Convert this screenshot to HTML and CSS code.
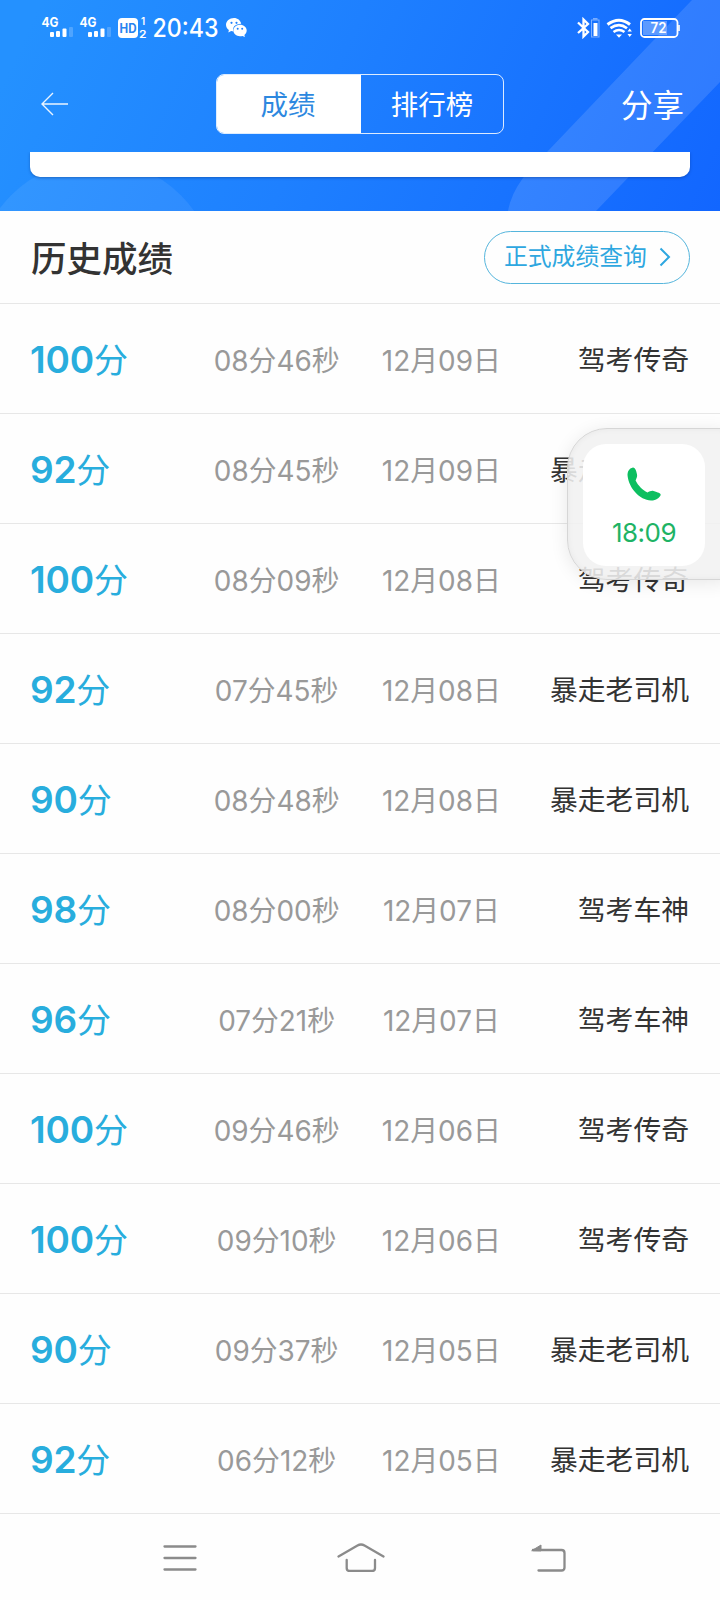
FILE: index.html
```html
<!DOCTYPE html>
<html lang="zh-CN">
<head>
<meta charset="utf-8">
<title>历史成绩</title>
<link rel="stylesheet" href="styles.css">
</head>
<body>
<div class="screen">
  <header class="hero">
    <svg class="hero-art" viewBox="0 0 720 211" width="720" height="211">
      <circle cx="96" cy="280" r="120" fill="#fff" fill-opacity=".07"/>
      <path d="M692 0H720V82L596 211H508Q511 194 523 178Q533 165 547 152Z" fill="#fff" fill-opacity=".12"/>
    </svg>
    <div class="status">
      <div class="status-left">
        <svg width="177" height="24" viewBox="41 15 177 24" class="status-icons">
          <g fill="#fff">
            <text x="41.5" y="26.5" class="net" textLength="17" lengthAdjust="spacingAndGlyphs">4G</text><text x="79.5" y="26.5" class="net" textLength="17" lengthAdjust="spacingAndGlyphs">4G</text>
            <rect x="50" y="32" width="4" height="5" rx="1"/><rect x="56" y="31" width="4" height="6" rx="1"/><rect x="62.500" y="28.500" width="4" height="8.500" rx="1"/><rect x="69" y="27" width="4" height="10" rx="1" opacity=".2"/>
            <rect x="88" y="32" width="4" height="5" rx="1"/><rect x="94" y="31" width="4" height="6" rx="1"/><rect x="100.500" y="28.500" width="4" height="8.500" rx="1"/><rect x="107" y="27" width="4" height="10" rx="1" opacity=".2"/>
            <rect x="118" y="18" width="20" height="20" rx="4"/>
            <text x="141" y="25.200" class="sim">1</text><text x="139" y="37.500" class="sim" textLength="7.500" lengthAdjust="spacingAndGlyphs">2</text>
            <text x="152.500" y="37" class="clock" textLength="66" lengthAdjust="spacingAndGlyphs">20:43</text>
          </g>
          <text x="119.500" y="32.500" class="hd" textLength="17" lengthAdjust="spacingAndGlyphs">HD</text>
        </svg>
        <svg width="21" height="20" viewBox="0 0 21 20" class="wechat">
          <path fill="#fff" d="M8 0C3.500 0 0 3 0 6.800c0 2.100 1.100 4 2.900 5.200L2.300 14.600l2.900-1.500q1.100.4 2.300.4C6 9.300 9 5.800 15.200 5.700 14.500 2.400 11.600 0 8 0Z"/>
          <path fill="#fff" d="M14 6.800c3.700 0 6.700 2.500 6.700 5.700 0 1.800-.9 3.300-2.300 4.400l.5 2.200-2.500-1.200q-1.100.3-2.400.3c-3.700 0-6.600-2.500-6.600-5.700s2.900-5.700 6.600-5.700Z"/>
          <g fill="#2081fc"><circle cx="5.500" cy="4.800" r="1.100"/><circle cx="10.500" cy="4.800" r="1.100"/><circle cx="11.700" cy="10.800" r="1"/><circle cx="16.200" cy="10.800" r="1"/></g>
        </svg>
      </div>
      <svg width="104" height="22" viewBox="576 17 104 22">
        <g fill="none" stroke="#fff">
          <path d="M578 22.500L588 32L583.500 36.500V19.500L588 24L578 33" stroke-width="2.300"/>
          <rect x="591.500" y="20" width="7.500" height="17" stroke-opacity=".45"/>
          <path d="M593 18.800h4.500" stroke-opacity=".6"/>
          <path d="M607.500 24.500Q619 16 630 24.500" stroke-width="3"/>
          <path d="M610.500 28.200Q619 22 627 28.200" stroke-width="2.700"/>
          <path d="M613.500 32Q619 28 624.500 32" stroke-width="2.500"/>
          <rect x="641" y="19" width="36.500" height="18" rx="3.500" stroke-width="1.800"/>
          <path d="M679 25v6" stroke-width="1.600"/>
        </g>
        <g fill="#fff"><rect x="593.500" y="23" width="4" height="13"/><path d="M616 34.500h6l-3 3.300zM627.500 31.500l2.200-3 2.200 3zM627.500 34l2.200 3 2.200-3z"/><rect x="643" y="21" width="24" height="14" opacity=".3"/></g>
        <text x="650.500" y="33" class="battery" textLength="16" lengthAdjust="spacingAndGlyphs">72</text>
      </svg>
    </div>
    <nav class="nav">
      <svg class="back" width="28" height="24" viewBox="0 0 28 24"><path d="M12 1L1 12L12 23M1 12H27" fill="none" stroke="#fff" stroke-opacity=".9" stroke-width="1.400"/></svg>
      <div class="tabs"><span class="tab tab-active">成绩</span><span class="tab">排行榜</span></div>
      <span class="share">分享</span>
    </nav>
    <div class="card-edge"></div>
  </header>
  <section class="heading">
    <h1 class="title">历史成绩</h1>
    <a class="query">正式成绩查询<svg width="12" height="20" viewBox="0 0 12 20"><path d="M1.500 1.500L10 10L1.500 18.500" fill="none" stroke="#2ea7e0" stroke-width="2"/></svg></a>
  </section>
  <main>
    <div class="row"><span class="score"><b>100</b>分</span><span class="cell">08分46秒</span><span class="cell">12月09日</span><span class="name">驾考传奇</span></div>
    <div class="row"><span class="score"><b>92</b>分</span><span class="cell">08分45秒</span><span class="cell">12月09日</span><span class="name">暴走老司机</span></div>
    <div class="row"><span class="score"><b>100</b>分</span><span class="cell">08分09秒</span><span class="cell">12月08日</span><span class="name">驾考传奇</span></div>
    <div class="row"><span class="score"><b>92</b>分</span><span class="cell">07分45秒</span><span class="cell">12月08日</span><span class="name">暴走老司机</span></div>
    <div class="row"><span class="score"><b>90</b>分</span><span class="cell">08分48秒</span><span class="cell">12月08日</span><span class="name">暴走老司机</span></div>
    <div class="row"><span class="score"><b>98</b>分</span><span class="cell">08分00秒</span><span class="cell">12月07日</span><span class="name">驾考车神</span></div>
    <div class="row"><span class="score"><b>96</b>分</span><span class="cell">07分21秒</span><span class="cell">12月07日</span><span class="name">驾考车神</span></div>
    <div class="row"><span class="score"><b>100</b>分</span><span class="cell">09分46秒</span><span class="cell">12月06日</span><span class="name">驾考传奇</span></div>
    <div class="row"><span class="score"><b>100</b>分</span><span class="cell">09分10秒</span><span class="cell">12月06日</span><span class="name">驾考传奇</span></div>
    <div class="row"><span class="score"><b>90</b>分</span><span class="cell">09分37秒</span><span class="cell">12月05日</span><span class="name">暴走老司机</span></div>
    <div class="row"><span class="score"><b>92</b>分</span><span class="cell">06分12秒</span><span class="cell">12月05日</span><span class="name">暴走老司机</span></div>
  </main>
  <footer class="system-nav">
    <svg width="34" height="28" viewBox="0 0 34 28"><path d="M1.500 2.500H32.500M1.500 14H32.500M1.500 25.500H32.500"/></svg>
    <svg class="home" width="48" height="30" viewBox="0 0 48 30"><path d="M1.500 14.500L20.500 3.500Q24 1.500 27.500 3.500L46.500 14.500M9.700 18V26Q9.700 29 12.700 29H35Q38 29 38 26V18"/></svg>
    <svg width="36" height="30" viewBox="0 0 36 30"><path d="M2 7H30.500Q33.500 7 33.500 10V24.500Q33.500 27.500 30.500 27.500H7.500"/><path class="tip" d="M1 7.500L10 2V7.500Z"/></svg>
  </footer>
  <aside class="call">
    <div class="call-card">
      <svg width="34" height="34" viewBox="0 0 34 34"><path fill="#0cbf60" d="M6 .5C2 1.500 .3 4.500 .6 9C2 21 12.500 33 24 33.500C29 33.600 32.500 31 33.700 28C33.800 26 31 25.600 26.500 24C24.500 23.500 22.500 24.500 20.500 25.500C15.500 23 11 18.500 8.600 13.500C9.300 11.500 10.600 9.500 10 7.500C9.500 4.500 8.500 .5 6 .5Z"/></svg>
      <span class="call-time">18:09</span>
    </div>
  </aside>
</div>
</body>
</html>
```
FILE: styles.css
```css
* { box-sizing: border-box; }
body { margin: 0; background: #fff; font-family: Inter, "Noto Sans CJK SC", sans-serif; }
.screen { position: relative; width: 720px; height: 1600px; overflow: hidden; background: #fefefe; }
.hero { position: relative; height: 211px; background: linear-gradient(115deg, #2491ff 5%, #1e80ff 45%, #1266ff 100%); }
.hero-art { position: absolute; left: 0; top: 0; }
.status { position: relative; height: 52px; padding: 15px 40px 0 41px; display: flex; justify-content: space-between; align-items: flex-start; }
.status > svg { margin-top: 2px; }
.status-left { display: flex; gap: 8px; }
.status-icons { overflow: visible; }
.wechat { margin-top: 3px; }
.net { font-size: 13.5px; font-weight: 700; }
.sim { font-size: 9.8px; font-weight: 600; }
.clock { font-size: 25px; font-weight: 500; }
.hd { font-size: 12.5px; font-weight: 700; fill: #2784f0; }
.battery { font-size: 14px; font-weight: 600; fill: #fff; }
.nav { position: relative; height: 100px; padding: 22px 36px 18px 41px; display: grid; grid-template-columns: 175px 288px 1fr; grid-template-rows: 60px; align-items: center; }
.tabs { display: flex; height: 60px; border: 1px solid rgba(255,255,255,.85); border-radius: 8px; overflow: hidden; }
.tab { flex: 1; line-height: 61px; text-align: center; font-size: 27.5px; color: #fff; }
.tab-active { flex: none; width: 144px; padding-right: 2px; background: #fff; color: #2d88df; }
.share { justify-self: end; height: 60px; font-size: 31.5px; line-height: 63px; color: #fff; }
.card-edge { position: relative; height: 25px; margin: 0 30px; background: #fff; border-radius: 0 0 10px 10px; box-shadow: 0 1px 3px rgba(0,40,110,.4); clip-path: inset(0 -8px -8px -8px); }
.heading { height: 93px; padding: 0 30px; display: flex; align-items: center; justify-content: space-between; border-bottom: 1px solid #e7e7e7; }
.title { margin: 6px 0 0 1px; font-size: 35.5px; line-height: 52px; font-weight: 500; color: #333; }
.query { display: flex; align-items: center; gap: 12px; width: 206px; height: 53px; padding-left: 19px; border: 1px solid #55b5dc; border-radius: 27px; color: #2ea7e0; font-size: 23.8px; line-height: 50px; }
.row { height: 110px; padding: 0 31px 0 30px; display: grid; grid-template-columns: repeat(4, 1fr); align-items: center; border-bottom: 1px solid #e7e7e7; white-space: nowrap; }
.score { font-size: 34px; color: #28addd; letter-spacing: -.2px; }
.score b { font-size: 37px; font-weight: 600; }
.cell { padding-right: 1px; text-align: center; font-size: 27.9px; color: #999; }
.name { padding-bottom: 2px; text-align: right; font-size: 27.8px; color: #333; }
.system-nav { height: 86px; padding: 2px 153px 0 163px; display: flex; align-items: center; justify-content: space-between; }
.system-nav path { fill: none; stroke: #8b8b8b; stroke-width: 2.3; stroke-linecap: round; stroke-linejoin: round; }
.system-nav .tip { fill: #8b8b8b; stroke-width: 1; }
.home { margin: 0 6px 2px 0; }
.call { position: absolute; left: 567px; top: 428px; width: 160px; height: 152px; padding: 15px; border: 1px solid #d6d6d6; border-radius: 40px 0 0 40px; background: rgba(241,241,241,.88); box-shadow: 0 3px 18px rgba(0,0,0,.09), inset 0 0 6px rgba(0,0,0,.05); }
.call-card { width: 122px; height: 122px; padding-top: 23px; border-radius: 23px; background: #fff; display: flex; flex-direction: column; align-items: center; gap: 16px; }
.call-time { font-size: 26px; line-height: 32px; letter-spacing: -.5px; color: #1eb365; }
```
